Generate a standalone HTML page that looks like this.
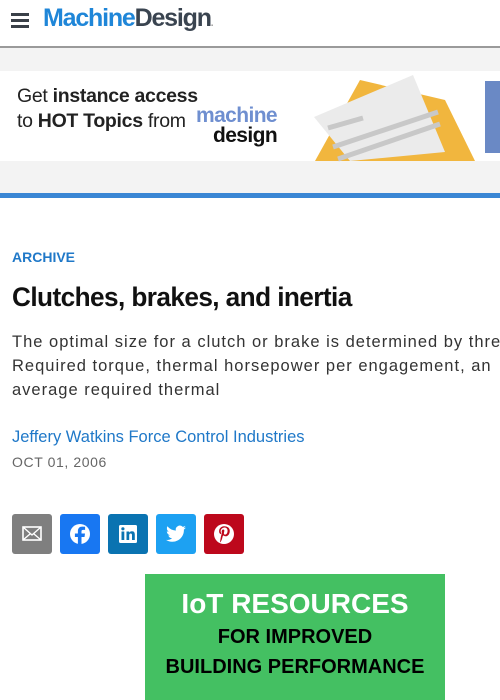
<!DOCTYPE html>
<html><head><style>
body{margin:0;width:500px;height:700px;overflow:hidden;background:#fff;font-family:"Liberation Sans",sans-serif;position:relative}
.a{position:absolute}
</style></head><body>
<div class="a" style="left:0;top:0;width:500px;height:46px;background:#fff;border-bottom:2px solid #9a9a9a;box-shadow:0 1px 2px #ccc"></div>
<div class="a" style="left:11px;top:13px;width:18px;height:3px;background:#3a4048;box-shadow:0 6px 0 #3a4048,0 12px 0 #3a4048"></div>
<div class="a" style="left:43px;top:2px;font-size:25px;font-weight:bold;letter-spacing:-1.2px;line-height:32px"><span style="color:#1f86d8">Machine</span><span style="color:#3a4450">Design</span><span style="color:#999;font-size:10px">.</span></div>
<div class="a" style="left:0;top:48px;width:500px;height:145px;background:#f3f3f3"></div>
<div class="a" style="left:0;top:71px;width:500px;height:90px;background:#fff"></div>
<div class="a" style="left:17px;top:84px;font-size:19.5px;color:#222;line-height:25px;letter-spacing:-0.3px">Get <b>instance access</b><br>to <b>HOT Topics</b> from</div>
<div class="a" style="left:196px;top:106px;font-size:21px;color:#6f8fd0;line-height:20px;letter-spacing:-0.6px;font-weight:bold">machine</div>
<div class="a" style="left:213px;top:124px;font-size:21px;color:#111;line-height:24px;letter-spacing:-0.6px;font-weight:bold">design</div>
<svg class="a" style="left:310px;top:72px" width="175" height="90"><polygon points="5,89 50,8 135,28 165,89" fill="#f1b63e"/><polygon points="4,45 103,3 135,80 40,89" fill="#ebebeb"/><g stroke="#c8c8c8" stroke-width="5"><line x1="18" y1="56" x2="53" y2="46"/><line x1="23" y1="75" x2="128" y2="40"/><line x1="28" y1="87" x2="130" y2="52"/></g></svg>
<div class="a" style="left:485px;top:81px;width:15px;height:72px;background:#6a89c5"></div>
<div class="a" style="left:0;top:193px;width:500px;height:5px;background:#3a86d4"></div>
<div class="a" style="left:12px;top:249px;font-size:14px;font-weight:bold;color:#1f78c8">ARCHIVE</div>
<div class="a" style="left:12px;top:282px;font-size:27px;font-weight:bold;color:#111;letter-spacing:-0.6px;transform:scaleX(0.97);transform-origin:left;white-space:nowrap">Clutches, brakes, and inertia</div>
<div class="a" style="left:12px;top:330px;font-size:16.5px;color:#333;line-height:24px;white-space:nowrap;letter-spacing:1px">The optimal size for a clutch or brake is determined by thre<br>Required torque, thermal horsepower per engagement, an<br>average required thermal</div>
<div class="a" style="left:12px;top:428px;font-size:16.5px;color:#1f78c8">Jeffery Watkins Force Control Industries</div>
<div class="a" style="left:12px;top:454px;font-size:14px;color:#666;letter-spacing:0.6px">OCT 01, 2006</div>
<div class="a" style="left:12px;top:514px;width:40px;height:40px;border-radius:3px;background:#7f7f7f"><svg width="40" height="40"><rect x="11" y="13" width="18" height="13" fill="none" stroke="#fff" stroke-width="1.6"/><path d="M11 13l9 8 9-8M11 26l7-6M29 26l-7-6" fill="none" stroke="#fff" stroke-width="1.4"/></svg></div>
<div class="a" style="left:60px;top:514px;width:40px;height:40px;border-radius:3px;background:#1877f2"><svg width="40" height="40"><circle cx="20" cy="20" r="10" fill="#fff"/><path d="M21.5 31v-8h3l.5-3.5h-3.5v-2c0-1 .4-1.6 1.7-1.6h1.9v-3.1a22 22 0 0 0-2.8-.2c-2.8 0-4.4 1.6-4.4 4.6v2.3h-3v3.5h3V31z" fill="#1877f2"/></svg></div>
<div class="a" style="left:108px;top:514px;width:40px;height:40px;border-radius:3px;background:#0a73b1"><svg width="40" height="40"><rect x="11" y="11" width="18" height="18" rx="1.5" fill="#fff"/><rect x="13.5" y="17.5" width="2.8" height="8.5" fill="#0a73b1"/><circle cx="14.9" cy="14.8" r="1.6" fill="#0a73b1"/><path d="M18.5 17.5h2.7v1.3c.5-.9 1.5-1.5 2.8-1.5 2.2 0 2.8 1.4 2.8 3.5V26H24v-4.7c0-1-.3-1.800-1.3-1.8-1.1 0-1.5.8-1.5 1.8V26h-2.7z" fill="#0a73b1"/></svg></div>
<div class="a" style="left:156px;top:514px;width:40px;height:40px;border-radius:3px;background:#1da1f2"><svg width="40" height="40"><path d="M30 13.5a8 8 0 0 1-2.4.7 4.2 4.2 0 0 0 1.8-2.3 8 8 0 0 1-2.6 1 4.1 4.1 0 0 0-7 3.7 11.6 11.6 0 0 1-8.4-4.3 4.1 4.1 0 0 0 1.3 5.5 4 4 0 0 1-1.9-.5 4.1 4.1 0 0 0 3.3 4 4 4 0 0 1-1.8.1 4.1 4.1 0 0 0 3.8 2.8A8.2 8.2 0 0 1 10 25.9a11.6 11.6 0 0 0 17.9-10.3A8.3 8.3 0 0 0 30 13.5z" fill="#fff"/></svg></div>
<div class="a" style="left:204px;top:514px;width:40px;height:40px;border-radius:3px;background:#bd081c"><svg width="40" height="40"><circle cx="20" cy="20" r="10" fill="#fff"/><path d="M18.6 22.5c-.5 2.5-1.1 4.8-2.7 6.1l.9-5.5 1.1-4.5c-.6-1.5.3-3.5 1.8-3 1.9.6-1.2 4.5 1.1 5 2.6.5 3.6-4.5 2-6.1-2.3-2.3-6.6-.1-6.1 3.3.1.8 1 1.1.3 2.3-1.5-.3-2-1.5-1.9-3.1.1-2.6 2.3-4.4 4.6-4.7 2.9-.3 5.6 1.1 6 3.8.4 3.1-1.3 6.4-4.4 6.2-.8-.1-1.2-.5-1.8-.9z" fill="#bd081c"/></svg></div>
<div class="a" style="left:145px;top:574px;width:300px;height:126px;background:#44c062"></div>
<div class="a" style="left:145px;top:588px;width:300px;text-align:center;font-size:28px;font-weight:bold;color:#fff">IoT RESOURCES</div>
<div class="a" style="left:145px;top:622px;width:300px;text-align:center;font-size:20px;font-weight:bold;color:#000;line-height:30px">FOR IMPROVED<br>BUILDING PERFORMANCE</div>
</body></html>
